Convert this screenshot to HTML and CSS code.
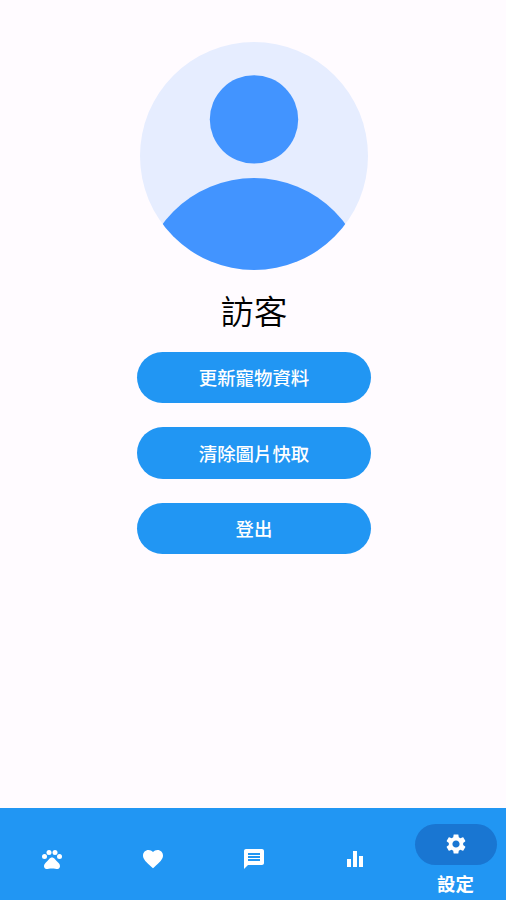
FILE: index.html
```html
<!DOCTYPE html>
<html lang="zh-Hant">
<head>
  <meta charset="UTF-8">
  <meta name="viewport" content="width=device-width, initial-scale=1.0">
  <link rel="stylesheet" href="styles.css">
  <title>設定</title>
</head>
<body>

  <main class="profile">
    <svg class="avatar" viewBox="0 0 228 228">
      <clipPath id="face"><circle cx="114" cy="114" r="114"/></clipPath>
      <circle cx="114" cy="114" r="114" fill="#e6edff"/>
      <g clip-path="url(#face)" fill="#4294ff">
        <circle cx="114" cy="77.4" r="44.2"/>
        <circle cx="114" cy="250" r="114"/>
      </g>
    </svg>
    <h1 class="name">訪客</h1>
    <div class="actions">
      <button class="action">更新寵物資料</button>
      <button class="action">清除圖片快取</button>
      <button class="action">登出</button>
    </div>
  </main>

  <nav class="tabs">
    <a class="tab">
      <svg class="icon" viewBox="0 0 24 24">
        <circle cx="4.5" cy="9.5" r="2.5"/>
        <circle cx="9" cy="5.5" r="2.5"/>
        <circle cx="15" cy="5.5" r="2.5"/>
        <circle cx="19.5" cy="9.5" r="2.5"/>
        <path d="M17.34 14.86c-.87-1.02-1.6-1.89-2.48-2.91-.46-.54-1.05-1.08-1.75-1.32-.11-.04-.22-.07-.33-.09-.25-.04-.52-.04-.78-.04s-.53 0-.79.05c-.11.02-.22.05-.33.09-.7.24-1.28.78-1.75 1.32-.87 1.02-1.6 1.89-2.48 2.91-1.31 1.31-2.92 2.76-2.62 4.79.29 1.02 1.02 2.03 2.33 2.32.73.15 3.06-.44 5.54-.44h.18c2.48 0 4.81.58 5.54.44 1.31-.29 2.04-1.31 2.33-2.32.31-2.04-1.3-3.49-2.61-4.8z"/>
      </svg>
    </a>
    <a class="tab">
      <svg class="icon" viewBox="0 0 24 24">
        <path d="M12 21.35l-1.45-1.32C5.4 15.36 2 12.28 2 8.5 2 5.42 4.42 3 7.5 3c1.74 0 3.41.81 4.5 2.09C13.09 3.81 14.76 3 16.5 3 19.58 3 22 5.42 22 8.5c0 3.78-3.4 6.86-8.55 11.54L12 21.35z"/>
      </svg>
    </a>
    <a class="tab">
      <svg class="icon" viewBox="0 0 24 24">
        <path d="M20 2H4c-1.1 0-1.99.9-1.99 2L2 22l4-4h14c1.1 0 2-.9 2-2V4c0-1.1-.9-2-2-2zM6 6h12v2H6V6zm12 8H6v-2h12v2zm0-3H6V9h12v2z"/>
      </svg>
    </a>
    <a class="tab">
      <svg class="icon" viewBox="0 0 24 24">
        <path d="M10 20h4V4h-4v16zm-6 0h4v-8H4v8zM16 9v11h4V9h-4z"/>
      </svg>
    </a>
    <a class="tab active">
      <span class="pill">
        <svg class="icon" viewBox="0 0 24 24">
          <path d="M19.14 12.94c.04-.3.06-.61.06-.94 0-.32-.02-.64-.07-.94l2.03-1.58c.18-.14.23-.41.12-.61l-1.92-3.32c-.12-.22-.37-.29-.59-.22l-2.39.96c-.5-.38-1.03-.7-1.62-.94l-.36-2.54c-.04-.24-.24-.41-.48-.41h-3.84c-.24 0-.43.17-.47.41l-.36 2.54c-.59.24-1.13.57-1.62.94l-2.39-.96c-.22-.08-.47 0-.59.22L2.74 8.87c-.12.21-.08.47.12.61l2.03 1.58c-.05.3-.09.63-.09.94s.02.64.07.94l-2.03 1.58c-.18.14-.23.41-.12.61l1.92 3.32c.12.22.37.29.59.22l2.39-.96c.5.38 1.03.7 1.62.94l.36 2.54c.05.24.24.41.48.41h3.84c.24 0 .44-.17.47-.41l.36-2.54c.59-.24 1.13-.56 1.62-.94l2.39.96c.22.08.47 0 .59-.22l1.92-3.32c.12-.22.07-.47-.12-.61l-2.01-1.58zM12 15.6c-1.98 0-3.6-1.62-3.6-3.6s1.62-3.6 3.6-3.6 3.6 1.62 3.6 3.6-1.62 3.6-3.6 3.6z"/>
        </svg>
      </span>
      <span class="label">設定</span>
    </a>
  </nav>

</body>
</html>
```

FILE: styles.css
```css
body {
  margin: 0;
  height: 100vh;
  display: flex;
  flex-direction: column;
  background-color: #fffbff;
  font-family: "Noto Sans CJK TC", sans-serif;
}

.profile {
  flex: 1;
  display: flex;
  flex-direction: column;
  align-items: center;
  padding-top: 42.3px;
  padding-left: 2px;
}

.avatar {
  width: 228px;
  height: 228px;
}

.name {
  margin: 15.5px 0 18px;
  font-size: 33.4px;
  font-weight: 350;
  line-height: 48px;
  color: #000;
}

.actions {
  display: flex;
  flex-direction: column;
  gap: 24.2px;
}

.action {
  width: 234.6px;
  height: 51.3px;
  padding: 0;
  border: none;
  border-radius: 26px;
  background-color: #2196f3;
  color: #fff;
  font-family: inherit;
  font-size: 18.4px;
  font-weight: 500;
  cursor: pointer;
}

.tabs {
  display: flex;
  height: 92px;
  padding-left: 1px;
  background-color: #2196f3;
}

.tab {
  flex: 1;
  display: flex;
  flex-direction: column;
  align-items: center;
  justify-content: center;
  padding-top: 10px;
  box-sizing: border-box;
  color: #fff;
}

.tab.active {
  justify-content: flex-start;
  padding-top: 15.7px;
}

.icon {
  width: 24px;
  height: 24px;
  fill: currentColor;
}

.pill {
  display: flex;
  align-items: center;
  justify-content: center;
  width: 82px;
  height: 41px;
  border-radius: 21px;
  background-color: #1976d2;
}

.label {
  margin-top: 5px;
  font-size: 18.4px;
  font-weight: 700;
  line-height: 26px;
}
```
